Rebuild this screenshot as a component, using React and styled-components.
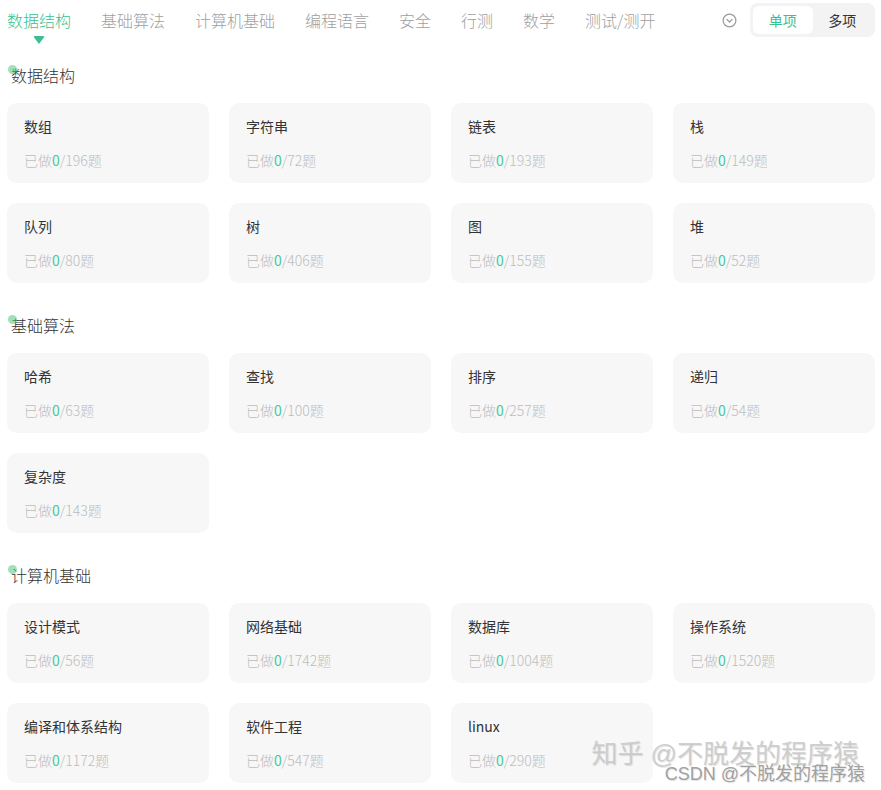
import React, { useState } from 'react';
import styled, { createGlobalStyle } from 'styled-components';

const GlobalStyle = createGlobalStyle`
  body {
    margin: 0;
    background: #fff;
    font-family: "Noto Sans CJK SC", "Noto Sans", sans-serif;
  }
`;

const Page = styled.div`
  position: relative;
  width: 881px;
  min-height: 790px;
  padding: 0 6px 0 7px;
  box-sizing: border-box;
  overflow: hidden;
`;

const TopBar = styled.div`
  display: flex;
  align-items: center;
  height: 40px;
`;

const Tabs = styled.div`
  display: flex;
  gap: 30px;
  flex: 1;
`;

const Tab = styled.div`
  position: relative;
  font-size: 16px;
  line-height: 40px;
  font-weight: 300;
  color: ${p => (p.$active ? '#3bbf8f' : '#a0a0a0')};
  cursor: pointer;
  white-space: nowrap;
`;

const Caret = styled.span`
  position: absolute;
  left: 50%;
  top: 36px;
  transform: translateX(-50%);
  width: 0;
  height: 0;
  border-left: 6px solid transparent;
  border-right: 6px solid transparent;
  border-top: 8px solid #3bbf8f;
  border-radius: 2px;
`;

const MoreButton = styled.div`
  display: flex;
  align-items: center;
  margin-right: 13px;
  color: #9a9a9a;
`;

const Toggle = styled.div`
  display: flex;
  width: 125px;
  height: 34px;
  padding: 3px;
  box-sizing: border-box;
  background: #f3f3f3;
  border-radius: 8px;
`;

const ToggleItem = styled.div`
  flex: 1;
  display: flex;
  align-items: center;
  justify-content: center;
  font-size: 14px;
  border-radius: 6px;
  color: ${p => (p.$active ? '#3bbf8f' : '#333')};
  background: ${p => (p.$active ? '#fff' : 'transparent')};
  cursor: pointer;
`;

const Sections = styled.div`
  display: flex;
  flex-direction: column;
  gap: 30px;
  padding-top: 23px;
`;

const Section = styled.section``;

const Heading = styled.h2`
  position: relative;
  margin: 0 0 16px;
  padding-left: 4px;
  font-size: 16px;
  line-height: 24px;
  font-weight: 300;
  color: #333;

  &::before {
    content: '';
    position: absolute;
    left: 1px;
    top: 2px;
    width: 9px;
    height: 9px;
    border-radius: 50%;
    background: rgba(80, 200, 130, 0.55);
  }
`;

const Grid = styled.div`
  display: grid;
  grid-template-columns: repeat(4, 202px);
  gap: 20px;
`;

const Card = styled.div`
  height: 80px;
  padding: 13px 17px 0;
  box-sizing: border-box;
  background: #f7f7f7;
  border-radius: 10px;
  cursor: pointer;
`;

const CardTitle = styled.div`
  font-size: 14px;
  line-height: 20px;
  color: #333;
`;

const CardStat = styled.div`
  margin-top: 14px;
  font-size: 14px;
  line-height: 20px;
  font-weight: 300;
  color: #bdbdbd;

  b {
    font-weight: normal;
    color: #45c99a;
  }
`;

const Watermark = styled.div`
  position: absolute;
  right: ${p => p.$right}px;
  top: ${p => p.$top}px;
  font-family: "Liberation Sans", "Noto Sans CJK SC", sans-serif;
  font-size: ${p => p.$size}px;
  color: ${p => p.$color};
  text-shadow: 1px 1px 1px rgba(0, 0, 0, 0.12);
  white-space: nowrap;
  pointer-events: none;
`;

const tabs = ['数据结构', '基础算法', '计算机基础', '编程语言', '安全', '行测', '数学', '测试/测开'];

const data = [
  {
    title: '数据结构',
    items: [
      ['数组', 196], ['字符串', 72], ['链表', 193], ['栈', 149],
      ['队列', 80], ['树', 406], ['图', 155], ['堆', 52],
    ],
  },
  {
    title: '基础算法',
    items: [['哈希', 63], ['查找', 100], ['排序', 257], ['递归', 54], ['复杂度', 143]],
  },
  {
    title: '计算机基础',
    items: [
      ['设计模式', 56], ['网络基础', 1742], ['数据库', 1004], ['操作系统', 1520],
      ['编译和体系结构', 1172], ['软件工程', 547], ['linux', 290],
    ],
  },
];

const CircleDown = () => (
  <svg width="15" height="15" viewBox="0 0 16 16" fill="none" stroke="currentColor" strokeWidth="1.3">
    <circle cx="8" cy="8" r="6.8" />
    <path d="M5.2 6.8 L8 9.6 L10.8 6.8" strokeLinecap="round" strokeLinejoin="round" />
  </svg>
);

const App = () => {
  const [active, setActive] = useState(0);
  const [mode, setMode] = useState('single');

  return (
    <Page>
      <GlobalStyle />
      <TopBar>
        <Tabs>
          {tabs.map((t, i) => (
            <Tab key={t} $active={i === active} onClick={() => setActive(i)}>
              {t}
              {i === active && <Caret />}
            </Tab>
          ))}
        </Tabs>
        <MoreButton><CircleDown /></MoreButton>
        <Toggle>
          <ToggleItem $active={mode === 'single'} onClick={() => setMode('single')}>单项</ToggleItem>
          <ToggleItem $active={mode === 'multi'} onClick={() => setMode('multi')}>多项</ToggleItem>
        </Toggle>
      </TopBar>

      <Sections>
        {data.map(sec => (
          <Section key={sec.title}>
            <Heading>{sec.title}</Heading>
            <Grid>
              {sec.items.map(([name, total]) => (
                <Card key={name}>
                  <CardTitle>{name}</CardTitle>
                  <CardStat>已做<b>0</b>/{total}题</CardStat>
                </Card>
              ))}
            </Grid>
          </Section>
        ))}
      </Sections>

      <Watermark $right={22} $top={733} $size={26} $color="rgba(200,200,200,0.85)">知乎 @不脱发的程序猿</Watermark>
      <Watermark $right={16} $top={759} $size={18} $color="rgba(150,150,150,0.9)">CSDN @不脱发的程序猿</Watermark>
    </Page>
  );
};

export default App;
